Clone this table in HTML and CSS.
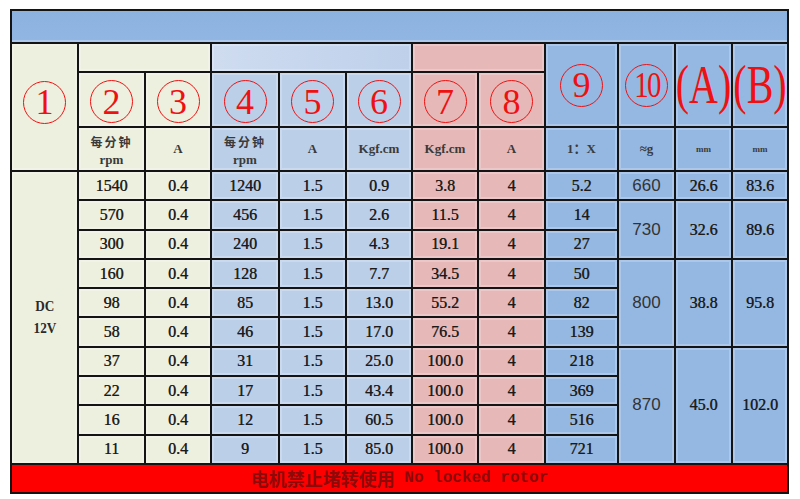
FILE: index.html
```html
<!DOCTYPE html>
<html lang="zh">
<head>
<meta charset="utf-8">
<title>电机参数表</title>
<link rel="stylesheet" href="styles.css">
</head>
<body>
<div class="sheet">
  <div class="c topbar"></div>

  <div class="c cream rs3 circ first"><span class="ring">1</span></div>
  <div class="c cream cs2"></div>
  <div class="c lblue-grp cs3"></div>
  <div class="c pink cs2"></div>
  <div class="c blue rs2 circ"><span class="ring">9</span></div>
  <div class="c blue rs2 circ"><span class="ring"><span class="ten">10</span></span></div>
  <div class="c blue rs2 letter"><span>(A)</span></div>
  <div class="c blue rs2 letter"><span>(B)</span></div>

  <div class="c cream circ row3"><span class="ring">2</span></div>
  <div class="c cream circ row3"><span class="ring">3</span></div>
  <div class="c lblue circ row3"><span class="ring">4</span></div>
  <div class="c lblue circ row3"><span class="ring">5</span></div>
  <div class="c lblue circ row3"><span class="ring">6</span></div>
  <div class="c pink circ row3"><span class="ring">7</span></div>
  <div class="c pink circ row3"><span class="ring">8</span></div>

  <div class="c cream unit"><span class="cjk">每分钟</span><span class="lat">rpm</span></div>
  <div class="c cream unit">A</div>
  <div class="c lblue unit"><span class="cjk">每分钟</span><span class="lat">rpm</span></div>
  <div class="c lblue unit">A</div>
  <div class="c lblue unit">Kgf.cm</div>
  <div class="c pink unit">Kgf.cm</div>
  <div class="c pink unit">A</div>
  <div class="c blue unit">1：X</div>
  <div class="c blue unit">≈g</div>
  <div class="c blue unit small">mm</div>
  <div class="c blue unit small">mm</div>

  <div class="c cream rs10 volt"><span>DC</span><span>12V</span></div>
  <div class="c cream">1540</div><div class="c cream">0.4</div><div class="c lblue">1240</div><div class="c lblue">1.5</div><div class="c lblue">0.9</div><div class="c pink">3.8</div><div class="c pink">4</div><div class="c blue">5.2</div>
  <div class="c blue sans">660</div><div class="c blue">26.6</div><div class="c blue">83.6</div>

  <div class="c cream">570</div><div class="c cream">0.4</div><div class="c lblue">456</div><div class="c lblue">1.5</div><div class="c lblue">2.6</div><div class="c pink">11.5</div><div class="c pink">4</div><div class="c blue">14</div>
  <div class="c blue sans rs2">730</div><div class="c blue rs2">32.6</div><div class="c blue rs2">89.6</div>

  <div class="c cream">300</div><div class="c cream">0.4</div><div class="c lblue">240</div><div class="c lblue">1.5</div><div class="c lblue">4.3</div><div class="c pink">19.1</div><div class="c pink">4</div><div class="c blue">27</div>

  <div class="c cream">160</div><div class="c cream">0.4</div><div class="c lblue">128</div><div class="c lblue">1.5</div><div class="c lblue">7.7</div><div class="c pink">34.5</div><div class="c pink">4</div><div class="c blue">50</div>
  <div class="c blue sans rs3">800</div><div class="c blue rs3">38.8</div><div class="c blue rs3">95.8</div>

  <div class="c cream">98</div><div class="c cream">0.4</div><div class="c lblue">85</div><div class="c lblue">1.5</div><div class="c lblue">13.0</div><div class="c pink">55.2</div><div class="c pink">4</div><div class="c blue">82</div>

  <div class="c cream">58</div><div class="c cream">0.4</div><div class="c lblue">46</div><div class="c lblue">1.5</div><div class="c lblue">17.0</div><div class="c pink">76.5</div><div class="c pink">4</div><div class="c blue">139</div>

  <div class="c cream">37</div><div class="c cream">0.4</div><div class="c lblue">31</div><div class="c lblue">1.5</div><div class="c lblue">25.0</div><div class="c pink">100.0</div><div class="c pink">4</div><div class="c blue">218</div>
  <div class="c blue sans rs4">870</div><div class="c blue rs4">45.0</div><div class="c blue rs4">102.0</div>

  <div class="c cream">22</div><div class="c cream">0.4</div><div class="c lblue">17</div><div class="c lblue">1.5</div><div class="c lblue">43.4</div><div class="c pink">100.0</div><div class="c pink">4</div><div class="c blue">369</div>

  <div class="c cream">16</div><div class="c cream">0.4</div><div class="c lblue">12</div><div class="c lblue">1.5</div><div class="c lblue">60.5</div><div class="c pink">100.0</div><div class="c pink">4</div><div class="c blue">516</div>

  <div class="c cream">11</div><div class="c cream">0.4</div><div class="c lblue">9</div><div class="c lblue">1.5</div><div class="c lblue">85.0</div><div class="c pink">100.0</div><div class="c pink">4</div><div class="c blue">721</div>

  <div class="c footer"><span class="fcjk">电机禁止堵转使用</span><span class="flat"> No locked rotor</span></div>
</div>
</body>
</html>
```

FILE: styles.css
```css
html, body {
  margin: 0;
  padding: 0;
  background: #ffffff;
}

body {
  padding: 9px 0 0 10px;
}

.sheet {
  width: 779px;
  box-sizing: border-box;
  display: grid;
  grid-template-columns: 65px 65px 64px 66px 65px 64px 64px 65px 71px 55px 55px 54px;
  grid-template-rows: 31px 27px 53px 42px repeat(10, 27.3px) 27px;
  gap: 2px;
  padding: 2px;
  background: #141414;
  font-family: "Liberation Serif", "Noto Sans CJK SC", serif;
  font-size: 16px;
  font-weight: normal;
  color: #1a1a1a;
  text-shadow: 0.4px 0 0 rgba(30, 30, 30, 0.8);
}

.c {
  display: flex;
  align-items: center;
  justify-content: center;
  box-shadow: inset 0 0 0 2px rgba(255, 255, 255, 0.22);
  overflow: visible;
  white-space: nowrap;
}

.topbar {
  grid-column: 1 / -1;
  background: linear-gradient(#8cb2e0, #92b6e3);
  box-shadow: inset 0 -2px 0 rgba(255, 255, 255, 0.25);
}

.cs2 { grid-column: span 2; }
.cs3 { grid-column: span 3; }
.rs2 { grid-row: span 2; }
.rs3 { grid-row: span 3; }
.rs4 { grid-row: span 4; }
.rs10 { grid-row: span 10; }

.cream { background: #eef0df; }
.lblue { background: #bccfe8; }
.lblue-grp { background: linear-gradient(90deg, #cfdcf0, #bed0ea); }
.pink { background: #e6b9b8; }
.blue { background: #95b8e3; }

.circ {
  text-shadow: none;
}

.circ.first {
  padding-bottom: 10px;
}

.circ.row3 {
  padding-top: 4px;
}

.ring {
  width: 41px;
  height: 41px;
  border: 1.8px solid #ee1111;
  border-radius: 50%;
  display: flex;
  align-items: center;
  justify-content: center;
  font-family: "Liberation Serif", serif;
  font-weight: normal;
  font-size: 36px;
  line-height: 1;
  color: #ee1111;
}

.ten {
  display: inline-block;
  transform: scaleX(0.8);
  letter-spacing: -2px;
}

.letter span {
  display: inline-block;
  font-family: "Liberation Serif", serif;
  font-weight: normal;
  font-size: 54px;
  color: #ee1111;
  transform: scaleX(0.74);
  line-height: 1;
  text-shadow: none;
}

.unit {
  flex-direction: column;
  font-size: 13px;
  line-height: 18px;
  font-weight: bold;
  color: #3a3a3a;
  text-shadow: none;
}

.unit .cjk {
  display: block;
  font-family: "Noto Sans CJK SC", sans-serif;
  font-size: 12px;
  line-height: 20px;
  letter-spacing: 2px;
}

.unit .lat {
  display: block;
  line-height: 15px;
}

.unit.small {
  font-size: 9px;
}

.sans {
  font-family: "Liberation Sans", sans-serif;
  font-weight: normal;
  font-size: 17px;
  color: #333333;
  text-shadow: none;
}

.volt {
  flex-direction: column;
  font-size: 15px;
  line-height: 22px;
  font-weight: bold;
  color: #2a2a2a;
  text-shadow: none;
}

.volt span {
  display: inline-block;
  transform: scaleX(0.88);
}

.footer {
  grid-column: 1 / -1;
  background: #fe0000;
  color: #8c0a0a;
  box-shadow: none;
  text-shadow: none;
}

.fcjk {
  font-family: "Noto Sans CJK SC", sans-serif;
  font-size: 18px;
  font-weight: bold;
}

.flat {
  font-family: "Liberation Mono", monospace;
  font-size: 16px;
  font-weight: bold;
  white-space: pre;
}
```
